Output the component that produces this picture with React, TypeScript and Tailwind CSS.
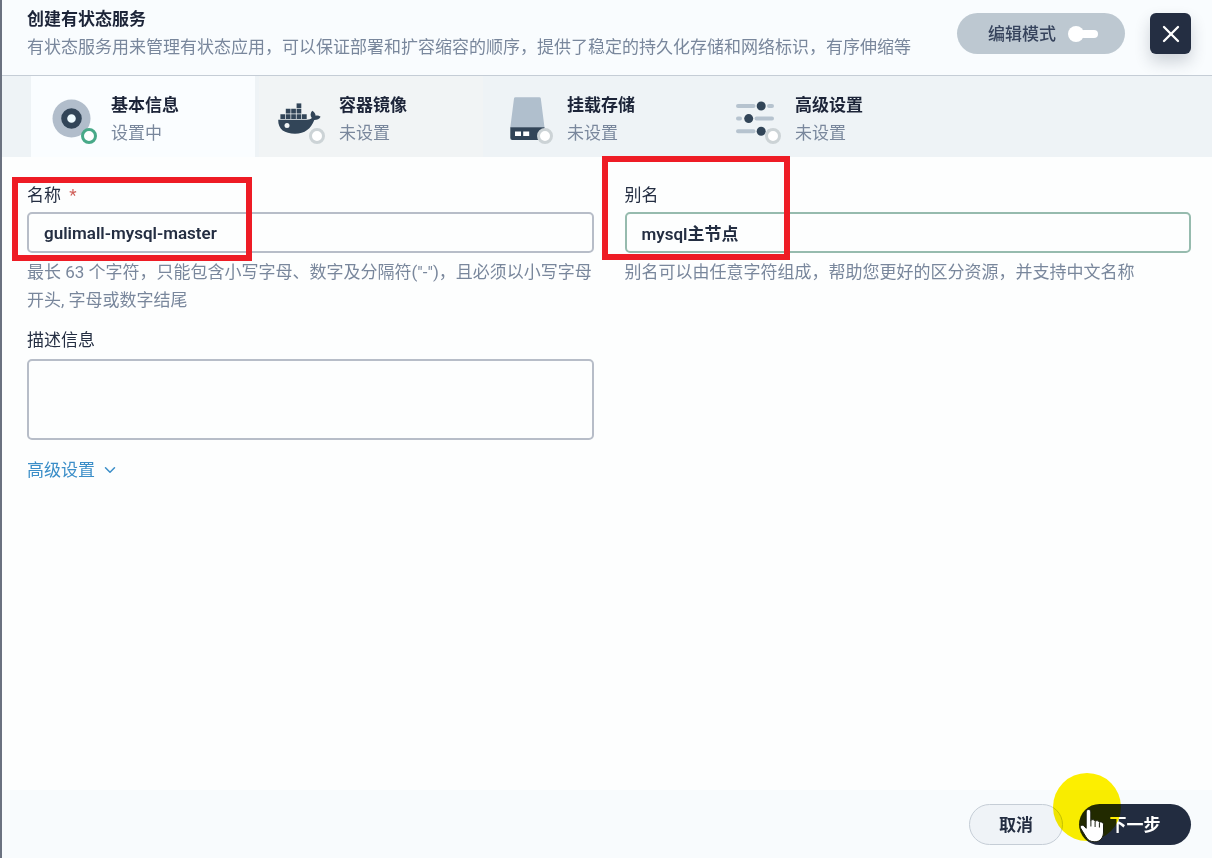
import { useState } from 'react';
import type { ReactNode } from 'react';
import { ChevronDown, X } from 'lucide-react';
import clsx from 'clsx';

const BasicInfoIcon = () => (
  <svg viewBox="0 0 48 48" className="size-12" aria-hidden="true">
    <circle cx="23.5" cy="23.5" r="19" fill="#b1bdcb" />
    <circle cx="23.5" cy="23.5" r="7.3" fill="#effbff" stroke="#324558" strokeWidth="6" />
  </svg>
);

const ImageIcon = () => (
  <svg viewBox="0 0 48 48" className="size-12" aria-hidden="true" fill="#324558">
    <path d="M20.6 8.400h4.700v4.700h-4.700z" />
    <path d="M9.800 13.800h4.700v4.700H9.800zM15.200 13.800h4.700v4.700h-4.700zM20.600 13.800h4.700v4.700h-4.700z" />
    <path d="M4.400 19.200h4.700v4.700H4.400zM9.800 19.200h4.700v4.700H9.800zM15.200 19.200h4.700v4.700h-4.700zM20.600 19.200h4.700v4.700h-4.700zM26 19.200h4.700v4.700H26z" />
    <path d="M2.200 24.800h28.800c2.200 0 3.800-.6 4.800-1.700-1.700-2.300-1.600-4.900.4-7.300 2.200 1.300 3.300 2.900 3.400 5 1.700-.5 3.400-.2 5 .9-1.200 2.200-3.300 3.200-6.300 3.200-3.200 8.600-9.500 13.800-19.300 13.800C8.800 38.700 2 34.700 2.200 24.800z" />
    <circle cx="11" cy="30.400" r="2.500" fill="#f1f4f5" />
  </svg>
);

const StorageIcon = () => (
  <svg viewBox="0 0 48 48" className="size-12" aria-hidden="true">
    <path d="M11.500 2.300h23.800a1.500 1.500 0 0 1 1.500 1.300L40.500 32.500H6.300L10 3.600a1.500 1.500 0 0 1 1.500-1.300z" fill="#b0bfcd" />
    <path d="M6.300 32.300h34.200V43a2 2 0 0 1-2 2H8.300a2 2 0 0 1-2-2z" fill="#324558" />
    <path d="M11 36.500h6v4.500h-6zM19.200 36.500h6v4.500h-6z" fill="#ffffff" />
  </svg>
);

const SlidersIcon = () => (
  <svg viewBox="0 0 48 48" className="size-12" aria-hidden="true">
    <path
      d="M6 11h15.500M37 11h3M6 23.600h2M24.500 23.600H40M6 36.300h15.500M37 36.300h3"
      stroke="#b6c3cf"
      strokeWidth="4"
      strokeLinecap="round"
    />
    <circle cx="29.200" cy="11" r="4.500" fill="#324558" />
    <circle cx="16.700" cy="23.600" r="4.500" fill="#324558" />
    <circle cx="29.200" cy="36.300" r="4.500" fill="#324558" />
  </svg>
);

const HandCursor = () => (
  <svg viewBox="0 0 26 35" className="h-[35px] w-[26px]" aria-hidden="true">
    <path
      d="M9.500 1.500c1.500 0 2.300 1 2.300 2.500v8.500c.6-1.400 3.900-1.200 4.300.8.900-1.200 3.900-.8 4.300 1.100 1.100-1 3.900-.4 4.100 1.700V24c0 5.500-3.200 9.800-8.600 9.800-4.600 0-7.400-1.800-9.200-5.300L1.500 20c-.9-2.100 1.400-3.700 3.200-2.300l2.500 2.600V4c0-1.500.8-2.500 2.300-2.500z"
      fill="#ffffff"
      stroke="#1a1f10"
      strokeWidth="1"
      strokeLinejoin="round"
    />
    <path d="M11.900 12v6.500M16.100 13.500V19M20.400 15v4.500" stroke="#1a1f10" strokeWidth="1" />
  </svg>
);

type Step = {
  key: string;
  title: string;
  status: string;
  icon: ReactNode;
};

const steps: Step[] = [
  { key: 'basic', title: '基本信息', status: '设置中', icon: <BasicInfoIcon /> },
  { key: 'image', title: '容器镜像', status: '未设置', icon: <ImageIcon /> },
  { key: 'storage', title: '挂载存储', status: '未设置', icon: <StorageIcon /> },
  { key: 'advanced', title: '高级设置', status: '未设置', icon: <SlidersIcon /> },
];

const StepTab = ({ step, active, onSelect }: { step: Step; active: boolean; onSelect: () => void }) => (
  <button
    type="button"
    onClick={onSelect}
    aria-current={active ? 'step' : undefined}
    className={clsx(
      'flex w-56 items-center gap-[15px] pt-1 pl-[17px] text-left',
      active ? 'bg-[#fafdff]' : step.key === 'image' && 'bg-[#f1f4f5]'
    )}
  >
    <span className="relative shrink-0">
      {step.icon}
      <span
        className={clsx(
          'absolute -right-px -bottom-px size-4 rounded-full border-[3px] bg-white',
          active ? 'border-[#48a988]' : 'border-[#ccd3d6]'
        )}
      />
    </span>
    <span className="flex flex-col">
      <span className="font-bold text-[#1c2438]">{step.title}</span>
      <span className="text-[#79879c]">{step.status}</span>
    </span>
  </button>
);

const App = () => {
  const [activeStep, setActiveStep] = useState('basic');
  const [editMode, setEditMode] = useState(false);
  const [name, setName] = useState('gulimall-mysql-master');
  const [alias, setAlias] = useState('mysql主节点');
  const [description, setDescription] = useState('');

  return (
    <div
      lang="zh-CN"
      className="flex min-h-screen flex-col border-l-2 border-[#6b7280] bg-[#fdfefe] font-[Roboto,'Noto_Sans_CJK_SC',sans-serif] text-[17px] leading-7 text-[#242e42]"
    >
      <header className="flex items-start justify-between border-b border-[#c5cdd6] bg-[#f9fcfe] pt-[5px] pr-[21px] pb-[14px] pl-[25px]">
        <div>
          <h1 className="font-bold text-[#1c2438]">创建有状态服务</h1>
          <p className="text-[#79879c]">
            有状态服务用来管理有状态应用，可以保证部署和扩容缩容的顺序，提供了稳定的持久化存储和网络标识，有序伸缩等
          </p>
        </div>
        <div className="flex shrink-0 gap-[25px] pt-2">
          <button
            type="button"
            role="switch"
            aria-checked={editMode}
            onClick={() => setEditMode(!editMode)}
            className="flex h-[41px] w-[168px] items-center justify-center gap-3 rounded-full bg-[#bdc8d1] pl-1 font-medium text-[#36435c]"
          >
            编辑模式
            <span className="flex items-center">
              <span className="size-4 rounded-full bg-white" />
              <span className="-ml-1 h-2 w-[18px] rounded-full bg-white" />
            </span>
          </button>
          <button
            type="button"
            aria-label="关闭"
            className="flex size-[41px] items-center justify-center rounded-md bg-[#242e42] text-white shadow-[0_8px_16px_rgba(36,46,66,0.2)]"
          >
            <X className="size-7" strokeWidth={2} />
          </button>
        </div>
      </header>

      <nav className="flex h-[81px] gap-1 bg-[#eef3f6] pl-[29px]">
        {steps.map((step) => (
          <StepTab
            key={step.key}
            step={step}
            active={step.key === activeStep}
            onSelect={() => setActiveStep(step.key)}
          />
        ))}
      </nav>

      <main className="flex-1 pt-6 pr-[21px] pl-[25px]">
        <div className="grid grid-cols-2 gap-x-[31px] gap-y-8">
          <div className="relative flex flex-col">
            <label htmlFor="name">
              名称 <span className="ml-1 text-[#d0605a]">*</span>
            </label>
            <input
              id="name"
              value={name}
              onChange={(e) => setName(e.target.value)}
              className="mt-[3px] h-[41px] rounded-[5px] border-2 border-[#b7bdc8] px-[15px] font-semibold outline-none"
            />
            <p className="mt-[5px] text-[#79879c]">
              最长 63 个字符，只能包含小写字母、数字及分隔符("-")，且必须以小写字母开头, 字母或数字结尾
            </p>
            <div className="pointer-events-none absolute -top-1 -left-[15px] h-[84px] w-60 border-6 border-[#ee1c25]" />
          </div>
          <div className="relative flex flex-col">
            <label htmlFor="alias">别名</label>
            <input
              id="alias"
              value={alias}
              onChange={(e) => setAlias(e.target.value)}
              className="mt-[3px] h-[41px] rounded-[5px] border-2 border-[#96bbae] px-[15px] font-semibold outline-none"
            />
            <p className="mt-[5px] text-[#79879c]">
              别名可以由任意字符组成，帮助您更好的区分资源，并支持中文名称
            </p>
            <div className="pointer-events-none absolute -top-[25px] -left-[23px] h-[104px] w-[188px] border-6 border-[#ee1c25]" />
          </div>
          <div className="-mt-5 flex flex-col items-start">
            <label htmlFor="description">描述信息</label>
            <textarea
              id="description"
              value={description}
              onChange={(e) => setDescription(e.target.value)}
              className="mt-[5px] h-[81px] w-full resize-none rounded-[5px] border-2 border-[#b7bdc8] px-[15px] outline-none"
            />
            <button type="button" className="mt-4 flex items-center gap-1.5 text-[#3b8ec8]">
              高级设置
              <ChevronDown className="size-[18px]" strokeWidth={2} />
            </button>
          </div>
        </div>
      </main>

      <footer className="flex justify-end gap-4 bg-[#f8fbfd] pt-[14px] pr-[21px] pb-[13px]">
        <button
          type="button"
          className="h-[41px] w-[94px] rounded-full border border-[#c5cdd6] bg-[#eff3f7] font-bold"
        >
          取消
        </button>
        <div className="relative">
          <button type="button" className="h-[41px] w-28 rounded-full bg-[#222c40] font-bold text-white">
            下一步
          </button>
          {/* click highlight with the pointer on top */}
          <div className="pointer-events-none absolute -top-[31px] -left-[26px] size-[68px] rounded-full bg-[#fff000] mix-blend-multiply" />
          <div className="pointer-events-none absolute top-1 left-0">
            <HandCursor />
          </div>
        </div>
      </footer>
    </div>
  );
};

export default App;
